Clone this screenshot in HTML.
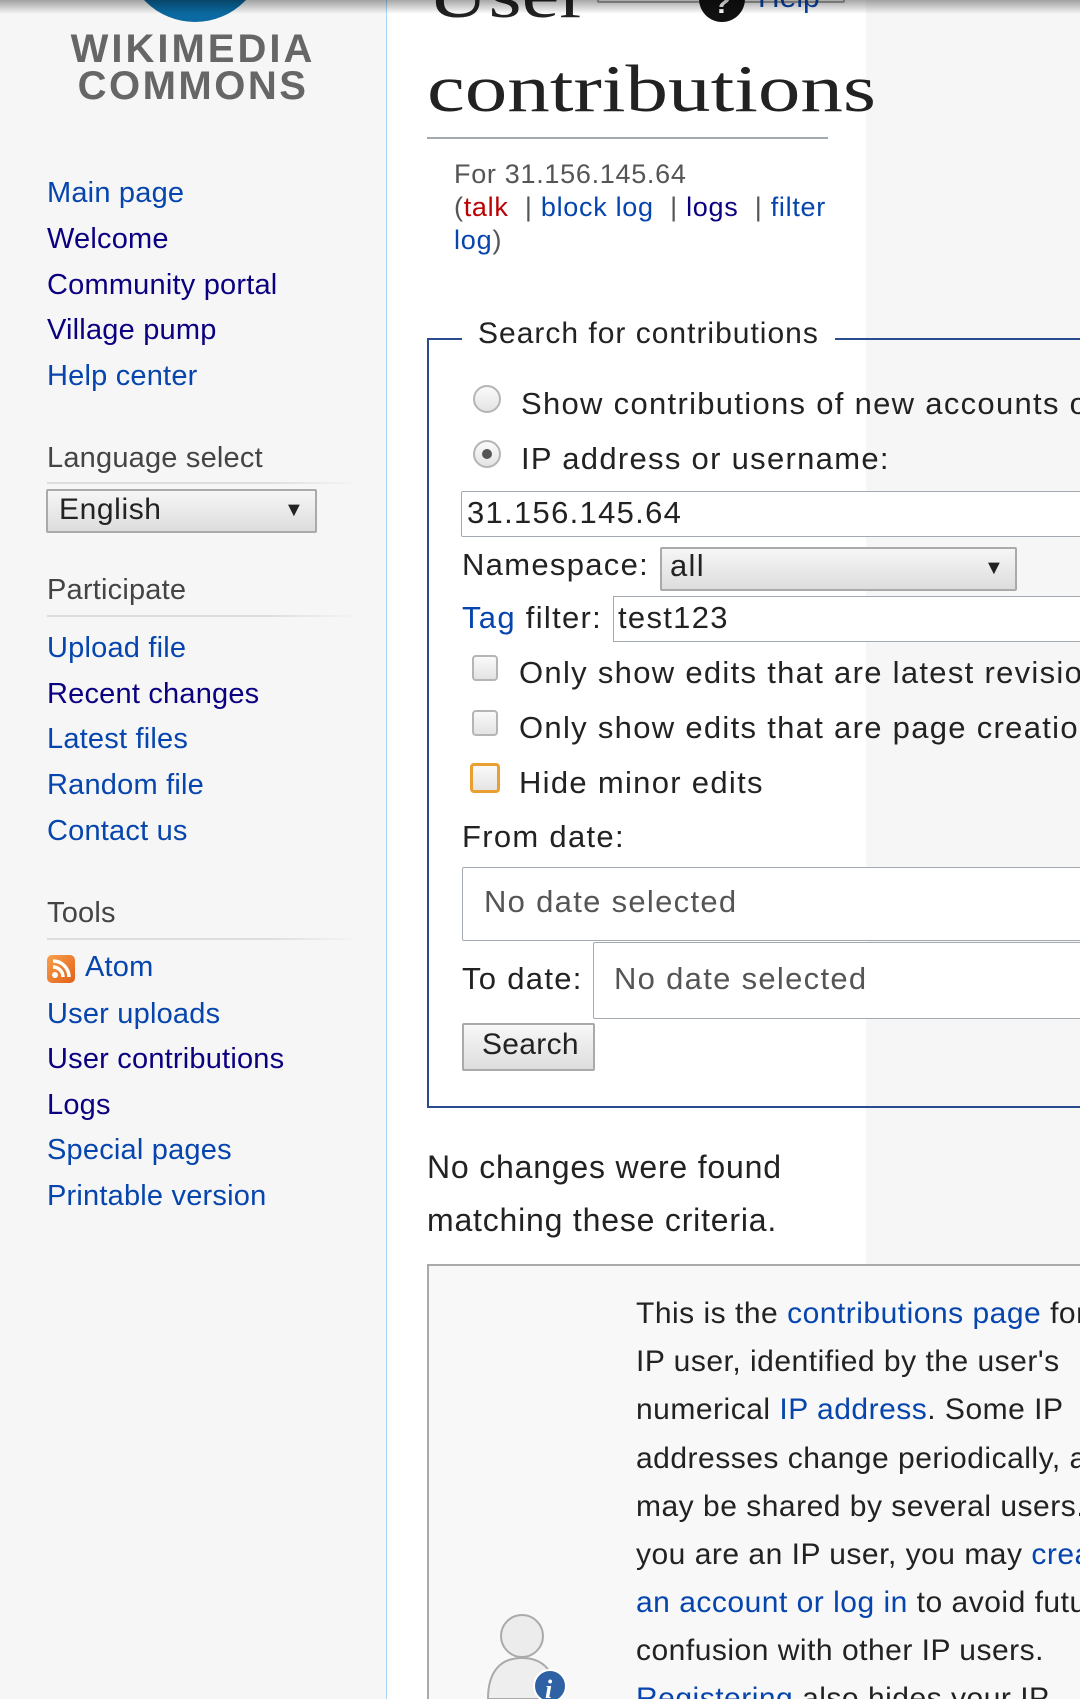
<!DOCTYPE html>
<html><head><meta charset="utf-8"><style>
*{margin:0;padding:0;box-sizing:border-box}
html,body{width:1080px;height:1699px;overflow:hidden}
body{position:relative;background:#f6f6f6;font-family:"Liberation Sans",Arial,sans-serif;color:#222}
.a{position:absolute;white-space:nowrap;line-height:32px}
.s{font-size:29px;letter-spacing:.2px}
.f{font-size:31px;letter-spacing:1.3px}
.t{font-size:30px;letter-spacing:.5px}
.b{color:#0645ad}.v{color:#0b0080}.r{color:#ba0000}
#main{position:absolute;left:386px;top:0;width:480px;height:1699px;background:#fff;border-left:1px solid #a7d7f9}
.hr{position:absolute;height:2px;background:linear-gradient(90deg,#ddd,#ddd 70%,#f6f6f6)}
.box{position:absolute;background:#fff;border:1px solid #a2a9b1;border-radius:2px}
.cb{position:absolute;width:26px;height:26px;border:2px solid #b5b5b5;border-radius:4px;background:linear-gradient(#fafafa,#e4e4e4)}
.rd{position:absolute;width:28px;height:28px;border:2px solid #b5b5b5;border-radius:50%;background:linear-gradient(#fafafa,#e4e4e4)}
.sel{position:absolute;border:2px solid #aaa;border-radius:2px;background:linear-gradient(#f6f6f6,#ddd)}
.logo{position:absolute;left:43px;width:300px;text-align:center;font-size:40px;font-weight:bold;color:#666;line-height:36px}
</style></head><body>
<div style="position:absolute;left:0;top:0;width:1080px;height:14px;background:linear-gradient(rgba(0,0,0,.35),rgba(0,0,0,0));z-index:5"></div>
<div style="position:absolute;left:125px;top:-118px;width:140px;height:140px;border-radius:50%;background:#0a6aa1"></div>
<div class="logo" style="top:31px;letter-spacing:3px">WIKIMEDIA</div>
<div class="logo" style="top:68px;letter-spacing:2.5px">COMMONS</div>
<div class="a s b" style="left:47px;top:177px">Main page</div>
<div class="a s v" style="left:47px;top:223px">Welcome</div>
<div class="a s v" style="left:47px;top:269px">Community portal</div>
<div class="a s v" style="left:47px;top:314px">Village pump</div>
<div class="a s b" style="left:47px;top:360px">Help center</div>
<div class="a s" style="left:47px;top:442px;color:#444">Language select</div>
<div class="hr" style="left:47px;top:482px;width:313px"></div>
<div class="sel" style="left:46px;top:489px;width:271px;height:44px"></div>
<div class="a" style="left:59px;top:494px;font-size:30px;letter-spacing:.6px">English</div>
<div class="a" style="left:284px;top:494px;font-size:20px">▼</div>
<div class="a s" style="left:47px;top:574px;color:#444">Participate</div>
<div class="hr" style="left:47px;top:615px;width:313px"></div>
<div class="a s b" style="left:47px;top:632px">Upload file</div>
<div class="a s v" style="left:47px;top:678px">Recent changes</div>
<div class="a s b" style="left:47px;top:723px">Latest files</div>
<div class="a s b" style="left:47px;top:769px">Random file</div>
<div class="a s b" style="left:47px;top:815px">Contact us</div>
<div class="a s" style="left:47px;top:897px;color:#444">Tools</div>
<div class="hr" style="left:47px;top:938px;width:313px"></div>
<div style="position:absolute;left:47px;top:955px;width:28px;height:28px;border-radius:5px;background:linear-gradient(135deg,#f9a04b,#e0601a)">
<svg width="28" height="28" viewBox="0 0 28 28"><circle cx="8" cy="20" r="3" fill="#fff"/><path d="M6 12a10 10 0 0 1 10 10M6 6a16 16 0 0 1 16 16" stroke="#fff" stroke-width="3.5" fill="none"/></svg></div>
<div class="a s b" style="left:85px;top:951px">Atom</div>
<div class="a s b" style="left:47px;top:998px">User uploads</div>
<div class="a s v" style="left:47px;top:1043px">User contributions</div>
<div class="a s v" style="left:47px;top:1089px">Logs</div>
<div class="a s b" style="left:47px;top:1134px">Special pages</div>
<div class="a s b" style="left:47px;top:1180px">Printable version</div>
<div id="main"></div>
<div class="a" style="left:427px;top:-40px;font-family:'Liberation Serif',serif;font-size:67px;line-height:70px;transform:scaleX(1.27);transform-origin:0 0">User</div>
<div style="position:absolute;left:597px;top:-6px;width:248px;height:9px;border:2px solid #aaa;border-radius:2px"></div>
<div style="position:absolute;left:699px;top:-24px;width:46px;height:46px;border-radius:50%;background:#111;color:#fff;font-weight:bold;font-size:30px;text-align:center;line-height:56px">?</div>
<div class="a b" style="left:758px;top:-18px;font-size:30px">Help</div>
<div class="a" style="left:427px;top:54px;font-family:'Liberation Serif',serif;font-size:67px;line-height:70px;transform:scaleX(1.27);transform-origin:0 0">contributions</div>
<div style="position:absolute;left:427px;top:137px;width:401px;height:2px;background:#a2a9b1"></div>
<div class="a" style="left:454px;top:158px;font-size:27px;letter-spacing:.7px;color:#555">For 31.156.145.64</div>
<div class="a" style="left:454px;top:191px;font-size:27px;letter-spacing:.7px;color:#555">(<span class="r">talk</span> &nbsp;| <span class="b">block log</span> &nbsp;| <span class="v">logs</span> &nbsp;| <span class="b">filter</span></div>
<div class="a" style="left:454px;top:224px;font-size:27px;letter-spacing:.8px;color:#555"><span class="b">log</span>)</div>
<div style="position:absolute;left:427px;top:338px;width:700px;height:770px;border:2px solid #2a4b8d;border-right:none"></div>
<div class="a" style="left:462px;top:318px;padding:0 16px;background:#fff;font-size:30px;letter-spacing:1px">Search for contributions</div>
<div class="rd" style="left:473px;top:385px"></div>
<div class="a f" style="left:521px;top:388px">Show contributions of new accounts only</div>
<div class="rd" style="left:473px;top:440px"></div><div style="position:absolute;left:482px;top:449px;width:10px;height:10px;border-radius:50%;background:#555"></div>
<div class="a f" style="left:521px;top:443px">IP address or username:</div>
<div class="box" style="left:461px;top:491px;width:640px;height:46px"></div>
<div class="a f" style="left:467px;top:497px">31.156.145.64</div>
<div class="a f" style="left:462px;top:549px">Namespace:</div>
<div class="sel" style="left:660px;top:547px;width:357px;height:44px"></div>
<div class="a f" style="left:670px;top:550px">all</div>
<div class="a" style="left:984px;top:552px;font-size:20px">▼</div>
<div class="a f" style="left:462px;top:602px"><span class="b">Tag</span> filter:</div>
<div class="box" style="left:613px;top:596px;width:500px;height:46px;border-radius:0"></div>
<div class="a f" style="left:618px;top:602px">test123</div>
<div class="cb" style="left:472px;top:655px"></div>
<div class="a f" style="left:519px;top:657px">Only show edits that are latest revisions</div>
<div class="cb" style="left:472px;top:710px"></div>
<div class="a f" style="left:519px;top:712px">Only show edits that are page creations</div>
<div class="cb" style="left:470px;top:763px;width:30px;height:30px;border:3px solid #eaa030"></div>
<div class="a f" style="left:519px;top:767px">Hide minor edits</div>
<div class="a f" style="left:462px;top:821px">From date:</div>
<div class="box" style="left:462px;top:867px;width:640px;height:74px"></div>
<div class="a f" style="left:484px;top:886px;color:#555">No date selected</div>
<div class="a f" style="left:462px;top:963px">To date:</div>
<div class="box" style="left:593px;top:942px;width:520px;height:77px"></div>
<div class="a f" style="left:614px;top:963px;color:#555">No date selected</div>
<div class="sel" style="left:462px;top:1023px;width:133px;height:48px;background:linear-gradient(#f8f8f8,#ddd)"></div>
<div class="a" style="left:482px;top:1029px;font-size:30px;letter-spacing:.3px">Search</div>
<div class="a" style="left:427px;top:1151px;font-size:32px;letter-spacing:.8px">No changes were found</div>
<div class="a" style="left:427px;top:1204px;font-size:32px;letter-spacing:.8px">matching these criteria.</div>
<div style="position:absolute;left:427px;top:1264px;width:700px;height:460px;background:#f8f8f8;border:2px solid #aaa;border-right:none"></div>
<div class="a t" style="left:636px;top:1298px">This is the <span class="b">contributions page</span> for an</div>
<div class="a t" style="left:636px;top:1346px">IP user, identified by the user's</div>
<div class="a t" style="left:636px;top:1394px">numerical <span class="b">IP address</span>. Some IP</div>
<div class="a t" style="left:636px;top:1443px">addresses change periodically, and</div>
<div class="a t" style="left:636px;top:1491px">may be shared by several users. If</div>
<div class="a t" style="left:636px;top:1539px">you are an IP user, you may <span class="b">create</span></div>
<div class="a t" style="left:636px;top:1587px"><span class="b">an account or log in</span> to avoid future</div>
<div class="a t" style="left:636px;top:1635px">confusion with other IP users.</div>
<div class="a t" style="left:636px;top:1683px"><span class="b">Registering</span> also hides your IP</div>
<svg style="position:absolute;left:478px;top:1606px" width="100" height="93" viewBox="0 0 100 93"><path d="M10 93C10 66 22 52 44 52S78 66 78 93Z" fill="#eee" stroke="#aaa" stroke-width="2"/><circle cx="44" cy="30" r="21" fill="#ececec" stroke="#aaa" stroke-width="2"/><circle cx="72" cy="80" r="16" fill="#2f62a4" stroke="#fff" stroke-width="2"/><text x="67" y="92" font-family="Liberation Serif" font-style="italic" font-weight="bold" font-size="26" fill="#fff">i</text></svg>
</body></html>
